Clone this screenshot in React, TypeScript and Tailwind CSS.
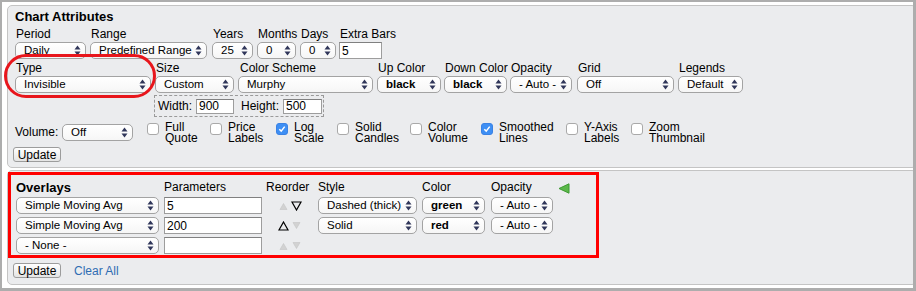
import React from 'react';

type SelProps = { value: string; className?: string; bold?: boolean };

const Arrows = () => (
  <svg width="7" height="11" viewBox="0 0 7 11" className="shrink-0">
    <path d="M0.5 4.5 L3.5 0.5 L6.5 4.5 Z" fill="#30365a" />
    <path d="M0.5 6.5 L3.5 10.5 L6.5 6.5 Z" fill="#30365a" />
  </svg>
);

function Select({ value, className = '', bold = false }: SelProps) {
  return (
    <div
      className={`flex h-[17px] items-center justify-between gap-[2px] rounded-[5px] border border-[#a3a3a3] bg-gradient-to-b from-white to-[#f6f6f6] pl-[8px] pr-[4px] text-[11.5px] leading-none text-black ${className}`}
    >
      <span className={`whitespace-nowrap ${bold ? 'font-bold' : ''}`}>{value}</span>
      <Arrows />
    </div>
  );
}

function TextBox({ value, className = '' }: { value: string; className?: string }) {
  return (
    <input
      readOnly
      defaultValue={value}
      className={`block border border-[#9d9d9d] border-t-[#808080] bg-white pl-[2px] text-[12px] leading-none text-black outline-none ${className}`}
    />
  );
}

function Field({
  label,
  className = '',
  labelClass = 'pl-[1px]',
  children,
}: {
  label: string;
  className?: string;
  labelClass?: string;
  children: React.ReactNode;
}) {
  return (
    <div className={`flex shrink-0 flex-col ${className}`}>
      <span className={`h-[14px] whitespace-nowrap text-[12px] leading-[14px] ${labelClass}`}>{label}</span>
      <div className="mt-[1px]">{children}</div>
    </div>
  );
}

function Check({
  top,
  bottom,
  checked = false,
  className = '',
}: {
  top: string;
  bottom: string;
  checked?: boolean;
  className?: string;
}) {
  return (
    <div className={`flex shrink-0 items-start ${className}`}>
      <span
        className={`mt-[1px] flex h-[12px] w-[12px] items-center justify-center rounded-[3px] border ${
          checked ? 'border-[#3a82e4] bg-[#3e8ff4]' : 'border-[#a9a9a9] bg-white'
        }`}
      >
        {checked && (
          <svg width="8" height="8" viewBox="0 0 8 8">
            <path d="M1.3 4.2 L3.2 6.1 L6.7 1.6" fill="none" stroke="#fff" strokeWidth="1.5" />
          </svg>
        )}
      </span>
      <span className="ml-[6px] flex flex-col text-[12px] leading-[11px]">
        <span>{top}</span>
        <span>{bottom}</span>
      </span>
    </div>
  );
}

function UpdateButton() {
  return (
    <button className="block h-[15px] w-[48px] rounded-[3px] border border-[#9c9c9c] bg-gradient-to-b from-white to-[#e4e4e4] text-[12px] leading-none text-black">
      Update
    </button>
  );
}

function Tri({ dir, active }: { dir: 'up' | 'down'; active: boolean }) {
  const big = dir === 'up' ? 'M5.5 1 L10 9 L1 9 Z' : 'M1 1 L10 1 L5.5 9 Z';
  const small = dir === 'up' ? 'M5.5 2.5 L9 8.5 L2 8.5 Z' : 'M2 1.5 L9 1.5 L5.5 7.5 Z';
  return (
    <svg width="11" height="10" viewBox="0 0 11 10">
      {active ? (
        <path d={big} fill="none" stroke="#000" strokeWidth="1.2" strokeLinejoin="miter" />
      ) : (
        <path d={small} fill="#d2d2d2" stroke="#c4c4c4" strokeWidth="0.6" />
      )}
    </svg>
  );
}

const overlays = [
  { name: 'Simple Moving Avg', param: '5', up: false, down: true, style: 'Dashed (thick)', color: 'green', opacity: '- Auto -' },
  { name: 'Simple Moving Avg', param: '200', up: true, down: false, style: 'Solid', color: 'red', opacity: '- Auto -' },
  { name: '- None -', param: '', up: false, down: false, style: '', color: '', opacity: '' },
];

export default function App() {
  return (
    <div className="relative h-[291px] w-[916px] overflow-hidden border-b-[3px] border-l-2 border-r-[3px] border-t-2 border-[#adadad] bg-white pl-[5px] pt-[3px] font-['Liberation_Sans',Arial,sans-serif] text-black">
      {/* Chart attributes */}
      <div className="w-[910px] rounded-[5px] border border-[#c4c4c4] bg-[#ebecee] pb-[5px] pl-[7px] pt-[3px]">
        <div className="h-[15px] text-[13px] font-bold leading-[15px]">Chart Attributes</div>

        <div className="mt-[3px] flex">
          <Field label="Period" className="w-[75px]">
            <Select value="Daily" className="w-[71px]" />
          </Field>
          <Field label="Range" className="w-[122px]">
            <Select value="Predefined Range" className="w-[117px]" />
          </Field>
          <Field label="Years" className="w-[45px]">
            <Select value="25" className="w-[41px]" />
          </Field>
          <Field label="Months" className="w-[43px]">
            <Select value="0" className="w-[39px]" />
          </Field>
          <Field label="Days" className="w-[39px]">
            <Select value="0" className="w-[36px]" />
          </Field>
          <Field label="Extra Bars">
            <TextBox value="5" className="h-[17px] w-[43px]" />
          </Field>
        </div>

        <div className="mt-[2px] flex">
          <Field label="Type" className="w-[140px]">
            <Select value="Invisible" className="w-[136px]" />
          </Field>
          <Field label="Size" className="w-[83px]">
            <Select value="Custom" className="w-[79px]" />
          </Field>
          <Field label="Color Scheme" className="w-[139px]" labelClass="pl-[2px]">
            <Select value="Murphy" className="w-[135px]" />
          </Field>
          <Field label="Up Color" className="w-[67px]">
            <Select value="black" bold className="w-[64px]" />
          </Field>
          <Field label="Down Color" className="w-[66px]">
            <Select value="black" bold className="w-[63px]" />
          </Field>
          <Field label="Opacity" className="w-[67px]">
            <Select value="- Auto -" className="w-[62px]" />
          </Field>
          <Field label="Grid" className="w-[101px]">
            <Select value="Off" className="w-[97px]" />
          </Field>
          <Field label="Legends">
            <Select value="Default" className="w-[65px]" />
          </Field>
        </div>

        <div className="ml-[139px] mt-[2px] flex h-[22px] w-[170px] items-center border border-dashed border-[#9a9a9a] pl-[3px] text-[12px]">
          <span className="w-[38px]">Width:</span>
          <TextBox value="900" className="h-[15px] w-[38px]" />
          <span className="ml-[7px] w-[42px]">Height:</span>
          <TextBox value="500" className="h-[15px] w-[39px]" />
        </div>

        <div className="mt-[5px] flex items-start">
          <span className="mt-[3px] w-[47px] text-[12px] leading-[14px]">Volume:</span>
          <div className="mt-[2px] w-[85px]">
            <Select value="Off" className="w-[71px]" />
          </div>
          <Check top="Full" bottom="Quote" className="w-[63px]" />
          <Check top="Price" bottom="Labels" className="w-[66px]" />
          <Check top="Log" bottom="Scale" checked className="w-[61px]" />
          <Check top="Solid" bottom="Candles" className="w-[73px]" />
          <Check top="Color" bottom="Volume" className="w-[71px]" />
          <Check top="Smoothed" bottom="Lines" checked className="w-[85px]" />
          <Check top="Y-Axis" bottom="Labels" className="w-[65px]" />
          <Check top="Zoom" bottom="Thumbnail" />
        </div>

        <div className="-ml-[2px] mt-[3px]">
          <UpdateButton />
        </div>
      </div>

      {/* Overlays */}
      <div className="mt-[2px] w-[910px] rounded-[5px] border border-[#c4c4c4] bg-[#ebecee] pb-[6px] pt-[1px]">
        <div className="h-[86px] w-[591px] border-[3px] border-[#ff0000] pl-[5px] pt-[5px]">
          <div className="flex h-[15px] items-center text-[12px] leading-[15px]">
            <span className="w-[148px] text-[13px] font-bold">Overlays</span>
            <span className="w-[102px]">Parameters</span>
            <span className="w-[52px]">Reorder</span>
            <span className="w-[104px]">Style</span>
            <span className="w-[69px]">Color</span>
            <span className="w-[67px]">Opacity</span>
            <svg width="12" height="11" viewBox="0 0 12 11" className="mt-[1px]">
              <path d="M11 0.8 L11 10.2 L1 5.5 Z" fill="#5bb84a" stroke="#3f9a33" strokeWidth="1" />
            </svg>
          </div>
          <div className="mt-[2px] flex flex-col gap-[3px]">
            {overlays.map((o, i) => (
              <div key={i} className="flex h-[17px] items-center">
                <div className="w-[148px]">
                  <Select value={o.name} className="w-[143px]" />
                </div>
                <div className="w-[102px]">
                  <TextBox value={o.param} className="h-[17px] w-[98px]" />
                </div>
                <div className="flex w-[52px] items-center gap-[2px] pl-[12px]">
                  <Tri dir="up" active={o.up} />
                  <Tri dir="down" active={o.down} />
                </div>
                {o.style && (
                  <>
                    <div className="w-[104px]">
                      <Select value={o.style} className="w-[99px]" />
                    </div>
                    <div className="w-[69px]">
                      <Select value={o.color} bold className="w-[63px]" />
                    </div>
                    <Select value={o.opacity} className="w-[62px]" />
                  </>
                )}
              </div>
            ))}
          </div>
        </div>
        <div className="ml-[5px] mt-[5px] flex items-center">
          <UpdateButton />
          <a className="ml-[13px] text-[12px] leading-none text-[#2f6db3]">Clear All</a>
        </div>
      </div>

      {/* highlight ring around Type */}
      <div className="pointer-events-none absolute left-[2px] top-[52px] h-[44px] w-[152px] rounded-[22px] border-[3px] border-[#e8161c]" />
    </div>
  );
}
